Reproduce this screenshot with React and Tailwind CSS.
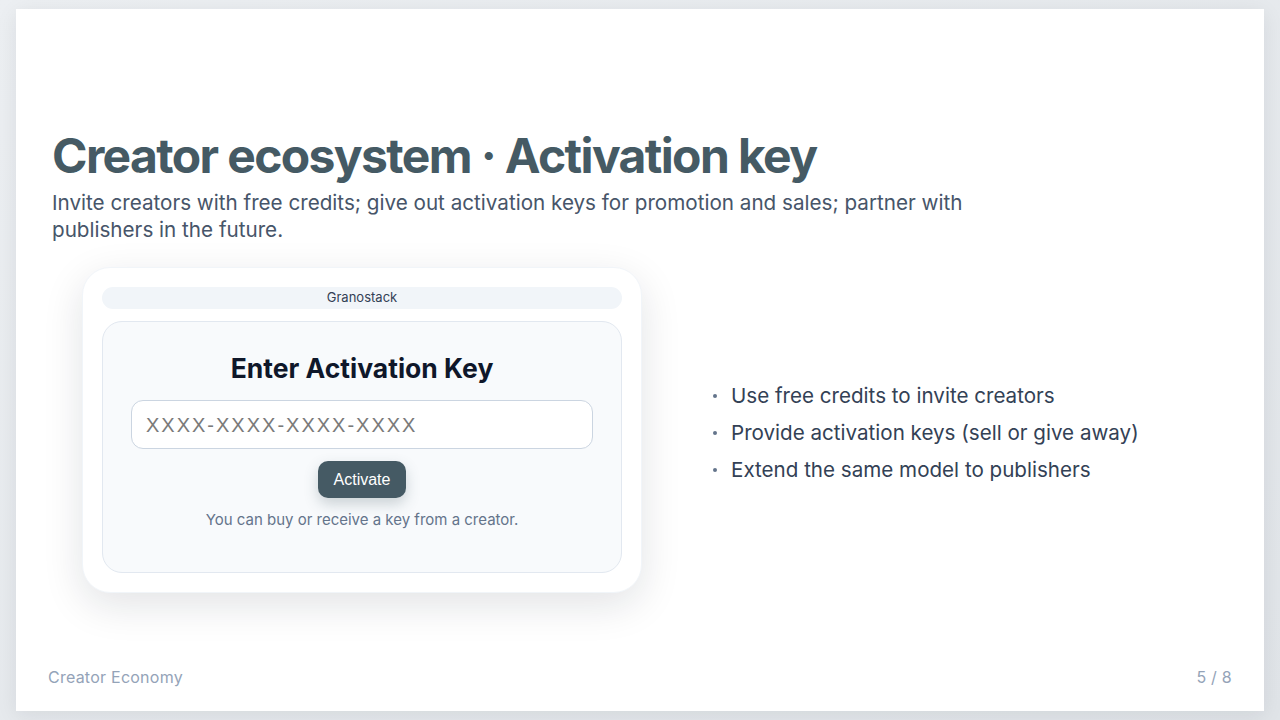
export default function App() {
  const bullets = [
    "Use free credits to invite creators",
    "Provide activation keys (sell or give away)",
    "Extend the same model to publishers",
  ];
  return (
    <div
      className="w-[1280px] h-[720px] bg-gradient-to-br from-[#eceff2] to-[#e0e4e8] pt-[9px] pl-[16px]"
      style={{ fontFamily: "Inter, 'Noto Sans', sans-serif" }}
    >
      <div className="w-[1248px] h-[702px] bg-white shadow-[0_4px_20px_rgba(15,23,42,0.08)] flex flex-col">
        <div className="flex-1 flex flex-col px-[36px] pt-[118px]">
          <h1 className="text-[48px] leading-[58px] font-bold text-[#455a64] tracking-[-0.034em]">
            Creator ecosystem · Activation key
          </h1>
          <p className="mt-[4px] text-[20.65px] leading-[27px] text-[#475569] max-w-[940px]">
            Invite creators with free credits; give out activation keys for promotion and sales; partner with publishers in the future.
          </p>
          <div className="mt-[24px] flex items-center">
            <div className="ml-[30px] w-[560px] h-[326px] rounded-[28px] bg-white border border-[#f1f5f9] shadow-[0_12px_40px_rgba(15,23,42,0.12)] p-[19px] flex flex-col">
              <div className="h-[22px] rounded-full bg-[#f1f5f9] flex items-center justify-center text-[13px] text-[#334155]">
                Granostack
              </div>
              <div className="mt-[12px] flex-1 rounded-[20px] bg-[#f8fafc] border border-[#e2e8f0] flex flex-col items-center pt-[28px]">
                <h2 className="text-[26.5px] leading-[36px] font-bold text-[#0f172a]">Enter Activation Key</h2>
                <div className="mt-[14px] w-[462px] h-[49px] rounded-[12px] bg-white border border-[#cbd5e1] flex items-center px-[14px]">
                  <span
                    className="text-[20px] text-[#7a7a7a] tracking-[0.1em]"
                    style={{ fontFamily: "'Liberation Sans', Arial, sans-serif" }}
                  >
                    XXXX-XXXX-XXXX-XXXX
                  </span>
                </div>
                <button
                  className="mt-[12px] h-[37px] px-[16px] rounded-[10px] bg-[#455a64] text-white text-[16px] shadow-[0_6px_14px_rgba(69,90,100,0.25)]"
                  style={{ fontFamily: "'Liberation Sans', Arial, sans-serif" }}
                >
                  Activate
                </button>
                <p className="mt-[12px] text-[15px] leading-[20px] text-[#64748b]">
                  You can buy or receive a key from a creator.
                </p>
              </div>
            </div>
            <ul className="ml-[71px] pt-[6px] flex flex-col gap-[7px]">
              {bullets.map((b) => (
                <li key={b} className="flex items-center text-[20.6px] leading-[30px] text-[#334155]">
                  <span className="w-[4px] h-[4px] rounded-full bg-[#64748b] mr-[14px]" />
                  {b}
                </li>
              ))}
            </ul>
          </div>
        </div>
        <div className="flex justify-between px-[32px] pb-[22px] text-[16px] tracking-[0.015em] text-[#94a3b8]">
          <span>Creator Economy</span>
          <span>5 / 8</span>
        </div>
      </div>
    </div>
  );
}
